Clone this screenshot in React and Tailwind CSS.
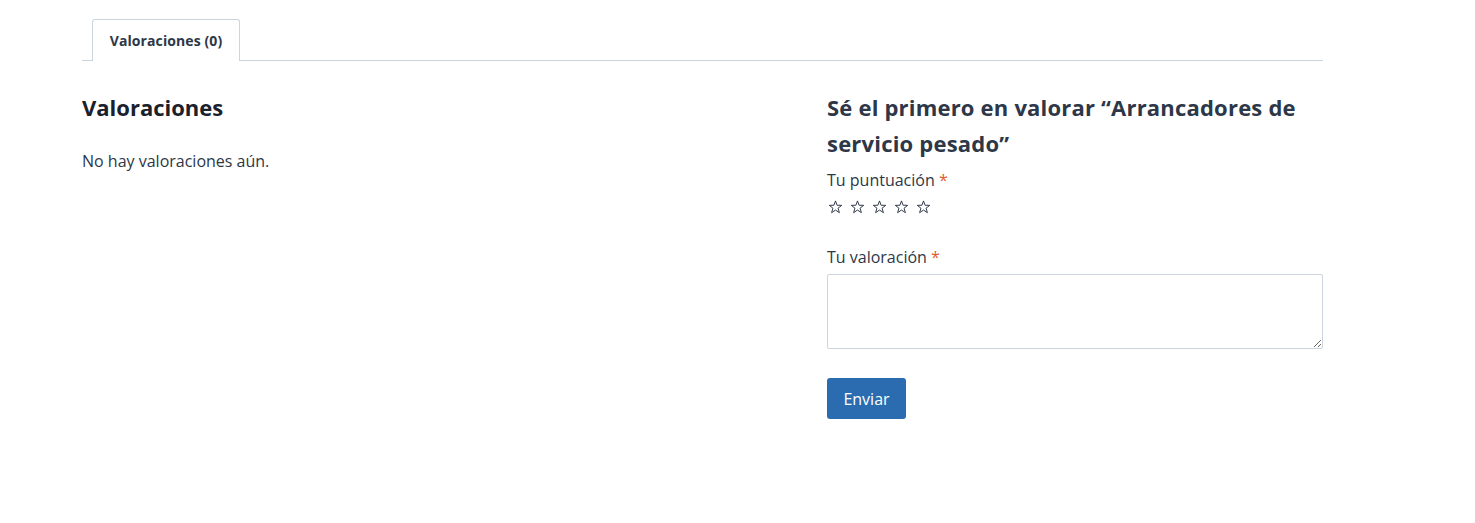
function Star() {
  return (
    <svg width="15" height="14" viewBox="0 0 24 23" fill="none" stroke="#2d3748" strokeWidth="1.6" strokeLinejoin="miter">
      <path d="M12 1.5 L14.6 8.6 L22.2 8.8 L16.2 13.5 L18.4 20.8 L12 16.5 L5.6 20.8 L7.8 13.5 L1.8 8.8 L9.4 8.6 Z" />
    </svg>
  );
}

export default function App() {
  const font = { fontFamily: '"Open Sans", "Noto Sans", sans-serif' };
  return (
    <div className="bg-white w-[1475px] h-[523px]" style={font}>
      <div className="ml-[82px] w-[1241px] pt-[19px]">
        <div className="flex border-b border-[#cbd5e0] pl-[10px]">
          <div className="-mb-px h-[42px] w-[148px] border border-b-0 border-[#cbd5e0] rounded-t-[3px] bg-white flex items-center justify-center text-[14px] font-bold text-[#2d3748] tracking-[0.1px]">
            Valoraciones (0)
          </div>
        </div>
        <div className="flex mt-[28px]">
          <div className="w-[745px]">
            <h2 className="text-[22px] font-bold leading-[36px] text-[#1a202c]">Valoraciones</h2>
            <p className="mt-[24px] text-[16px] leading-[24px] text-[#2d3748]">No hay valoraciones aún.</p>
          </div>
          <div className="flex-1">
            <h3 className="text-[22px] font-bold leading-[36px] text-[#2d3748] tracking-[0.2px]">
              Sé el primero en valorar “Arrancadores de servicio pesado”
            </h3>
            <div className="mt-[7px] text-[16px] leading-[24px] text-[#2d3748]">
              Tu puntuación <span className="text-[#e05d2b]">*</span>
            </div>
            <div className="flex gap-[7px] h-[14px] mt-[8px] ml-[1px]">
              <Star /><Star /><Star /><Star /><Star />
            </div>
            <div className="mt-[31px] text-[16px] leading-[24px] text-[#2d3748]">
              Tu valoración <span className="text-[#e05d2b]">*</span>
            </div>
            <textarea className="mt-[5px] block w-[496px] h-[75px] border border-[#cbd5e0] rounded-[2px] outline-none" />
            <button className="mt-[29px] h-[41px] w-[79px] bg-[#2b6cb0] text-white text-[16px] rounded-[3px]">
              Enviar
            </button>
          </div>
        </div>
      </div>
    </div>
  );
}
